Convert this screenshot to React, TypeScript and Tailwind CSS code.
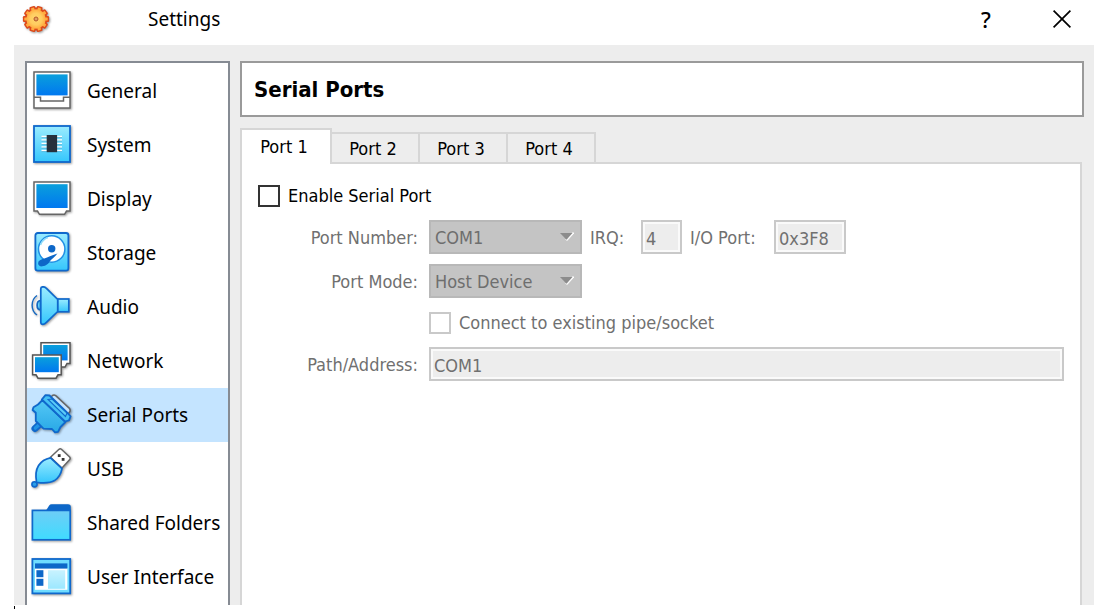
import { useState } from "react";
import type { ReactNode } from "react";

interface sidebarItem {
  name: string;
  icon: ReactNode;
}

const Gradients = () => {
  return (
    <svg width="0" height="0" className="absolute" aria-hidden="true">
      <defs>
        <linearGradient id="screen" x1="0" y1="0" x2="0" y2="1">
          <stop offset="0" stopColor="#0a9fdc" />
          <stop offset="1" stopColor="#0078f0" />
        </linearGradient>
        <linearGradient id="sky" x1="0" y1="0" x2="0" y2="1">
          <stop offset="0" stopColor="#9becff" />
          <stop offset="1" stopColor="#35c6fc" />
        </linearGradient>
        <linearGradient id="folder" x1="0" y1="0" x2="0" y2="1">
          <stop offset="0" stopColor="#6fcdf6" />
          <stop offset="1" stopColor="#3fdcff" />
        </linearGradient>
        <linearGradient id="plug" x1="0" y1="0" x2="0" y2="1">
          <stop offset="0" stopColor="#55c8f5" />
          <stop offset="1" stopColor="#28a8e6" />
        </linearGradient>
        <linearGradient id="pane" x1="0" y1="0" x2="0" y2="1">
          <stop offset="0" stopColor="#c8f2ff" />
          <stop offset="1" stopColor="#9ce8ff" />
        </linearGradient>
        <radialGradient id="gear">
          <stop offset="0" stopColor="#ffd66e" />
          <stop offset="0.6" stopColor="#ffcd60" />
          <stop offset="1" stopColor="#ffab40" />
        </radialGradient>
      </defs>
    </svg>
  );
};

const Icon = ({ children }: { children: ReactNode }) => {
  return (
    <svg
      viewBox="0 0 42 42"
      aria-hidden="true"
      className="size-[42px] shrink-0 drop-shadow-[1px_1px_1px_rgba(0,0,0,0.4)]"
    >
      {children}
    </svg>
  );
};

const teeth = [18, 54, 90, 126, 162, 198, 234, 270, 306, 342];

const GearIcon = () => {
  return (
    <svg
      viewBox="0 0 28 28"
      aria-hidden="true"
      className="size-7 drop-shadow-[1px_1px_1px_rgba(0,0,0,0.4)]"
    >
      <g fill="#dd4a1c">
        {teeth.map((angle) => {
          return (
            <rect
              key={angle}
              x="11"
              y="0.9"
              width="6"
              height="6"
              rx="1.2"
              transform={`rotate(${angle} 14 14)`}
            />
          );
        })}
        <circle cx="14" cy="14" r="11.4" />
      </g>
      <g fill="#ffab40">
        {teeth.map((angle) => {
          return (
            <rect
              key={angle}
              x="12.4"
              y="2.3"
              width="3.2"
              height="5"
              rx="0.6"
              transform={`rotate(${angle} 14 14)`}
            />
          );
        })}
      </g>
      <circle cx="14" cy="14" r="9.7" fill="url(#gear)" />
      <circle cx="14" cy="14" r="2" fill="#e0a060" stroke="#b5562a" strokeWidth="1" />
    </svg>
  );
};

const items: sidebarItem[] = [
  {
    name: "General",
    icon: (
      <Icon>
        <rect x="3" y="2" width="36" height="36" fill="#fff" stroke="#666" strokeWidth="1.5" />
        <rect x="5.4" y="4.4" width="31.2" height="21" fill="url(#screen)" />
        <path d="M3 27.3H9.5V31H32.5V27.3H39" fill="none" stroke="#666" strokeWidth="1.5" />
      </Icon>
    ),
  },
  {
    name: "System",
    icon: (
      <Icon>
        <rect x="3" y="2" width="36" height="36" fill="url(#sky)" stroke="#0f68cc" strokeWidth="1.8" />
        <path
          d="M10.5 12.5H31M10.5 16H31M10.5 19.5H31M10.5 23H31M10.5 26.5H31"
          stroke="#fff"
          strokeWidth="1.3"
        />
        <path
          d="M10.5 13.6H31M10.5 17.1H31M10.5 20.6H31M10.5 24.1H31M10.5 27.6H31"
          stroke="#4a9fc4"
          strokeWidth="0.6"
        />
        <rect x="15.7" y="11" width="10.4" height="17.2" fill="#26303d" />
      </Icon>
    ),
  },
  {
    name: "Display",
    icon: (
      <Icon>
        <path
          d="M3 4H39V33H35.5L33.5 36.3H8.5L6.5 33H3Z"
          fill="#fff"
          stroke="#666"
          strokeWidth="1.5"
        />
        <rect x="5.4" y="6.2" width="31.2" height="23.8" fill="url(#screen)" />
      </Icon>
    ),
  },
  {
    name: "Storage",
    icon: (
      <Icon>
        <rect x="4.4" y="1" width="33" height="37.6" rx="2.4" fill="url(#sky)" stroke="#0f68cc" strokeWidth="1.8" />
        <circle cx="20.7" cy="17" r="13.2" fill="#fff" stroke="#2190e4" strokeWidth="1.5" />
        <path d="M9.5 13A12 12 0 0 1 17 5.5" fill="none" stroke="#8fdcf8" strokeWidth="1.5" />
        <path
          d="M7.5 29.5C9 27.5 12.5 26.8 16 25.5C19 24.2 22.5 23 26.5 21.5C24 24.5 21 27 18.6 29.5C17.5 32.5 13.5 34.4 10 34.4C7.5 34 6.5 32 7.5 29.5Z"
          fill="#0d67c8"
        />
        <circle cx="20.7" cy="16.7" r="3.7" fill="#0d67c8" />
      </Icon>
    ),
  },
  {
    name: "Audio",
    icon: (
      <Icon>
        <path d="M9.5 14.5C5 15 5 23.5 9.5 23.8Z" fill="#65d5fb" stroke="#1568c0" strokeWidth="1.7" />
        <path d="M6 9.5C-0.5 14 -0.5 24.5 6 29" fill="none" stroke="#1568c0" strokeWidth="1.4" />
        <rect x="26.5" y="13" width="11.3" height="12.8" fill="url(#sky)" stroke="#0f68cc" strokeWidth="1.7" />
        <path
          d="M9.8 2.8Q9.8 0.8 12 0.8Q14 0.8 15.2 2.2L26.7 13.5V25.5L15.2 36.6Q14 38.3 12 38.3Q9.8 38.3 9.8 36.2Z"
          fill="url(#sky)"
          stroke="#0f68cc"
          strokeWidth="1.7"
        />
      </Icon>
    ),
  },
  {
    name: "Network",
    icon: (
      <Icon>
        <path d="M10 2.8H39V23.5H36L34 27H15L13 23.5H10Z" fill="#fff" stroke="#555" strokeWidth="1.5" />
        <rect x="12.2" y="5" width="24.4" height="15.4" fill="url(#screen)" />
        <path d="M1.6 15H30.2V34.8H27L25 38.2H7L5 34.8H1.6Z" fill="#fff" stroke="#555" strokeWidth="1.5" />
        <rect x="4" y="17.2" width="23.8" height="15" fill="url(#screen)" />
      </Icon>
    ),
  },
  {
    name: "Serial Ports",
    icon: (
      <Icon>
        <path
          d="M18 5L21.5 1.5Q23 0.5 25 1.8L38.5 14.5Q39.8 16.5 38.6 18L36 21.5Z"
          fill="#c4e4ff"
          stroke="#666"
          strokeWidth="1.6"
        />
        <path d="M10 29L4 34.5" stroke="#0f68cc" strokeWidth="7" strokeLinecap="round" />
        <path d="M9 30L4.4 34.1" stroke="#1e93e4" strokeWidth="3.4" strokeLinecap="round" />
        <path
          d="M11.5 6L7 10.5L2.5 13.2L1.6 16L4.8 18.8L4.8 27L12.5 34.6L21 35L24 38.4L27 37.8L29.5 33L34.5 28Z"
          fill="url(#plug)"
          stroke="#0f68cc"
          strokeWidth="1.8"
          strokeLinejoin="round"
        />
        <path
          d="M10.8 5.5L14.5 1.2L18.5 1.5L37.5 20L39.6 22.3L38 26.4L34 27.5Z"
          fill="#45bff4"
          stroke="#0f68cc"
          strokeWidth="1.8"
          strokeLinejoin="round"
        />
        <path d="M17 5.5L21 5L36 19L34.5 22.5Z" fill="#5cccf8" stroke="#0f68cc" strokeWidth="1.1" />
      </Icon>
    ),
  },
  {
    name: "USB",
    icon: (
      <Icon>
        <path
          d="M19.5 9.2L28 1.3Q29.3 0.3 30.6 1.5L38.6 9Q39.8 10.4 38.5 11.8L31 20Z"
          fill="#fff"
          stroke="#666"
          strokeWidth="1.5"
        />
        <rect x="26.8" y="6.2" width="2.8" height="2.8" fill="#333" />
        <rect x="30.7" y="10" width="2.8" height="2.8" fill="#333" />
        <circle cx="3.5" cy="36.3" r="2.6" fill="#2b9fe7" stroke="#0f68cc" strokeWidth="1.6" />
        <path
          d="M5.6 34.4C4.6 29 4.4 22.5 7.6 17.5C10.5 13 15.5 10.6 19.5 9.8L31 20.6C30.2 24.8 27.5 30 23.5 32.6C18.5 35.6 11.5 35.2 5.6 34.4Z"
          fill="url(#sky)"
          stroke="#0f68cc"
          strokeWidth="1.7"
          strokeLinejoin="round"
        />
      </Icon>
    ),
  },
  {
    name: "Shared Folders",
    icon: (
      <Icon>
        <path d="M15 8.5L18.2 3.4Q19 2.3 20.5 2.3H37Q39.8 2.3 39.8 5V9Z" fill="#0d67c8" />
        <rect x="1.4" y="8.4" width="37.8" height="29.4" fill="url(#folder)" stroke="#0f68cc" strokeWidth="1.7" />
      </Icon>
    ),
  },
  {
    name: "User Interface",
    icon: (
      <Icon>
        <rect x="1.4" y="3" width="37.8" height="34.4" fill="#6fdcff" stroke="#0f68cc" strokeWidth="1.8" />
        <rect x="4" y="12" width="32.4" height="21.8" fill="#fff" />
        <rect x="4" y="7.4" width="32.4" height="5.2" fill="#0d67c8" />
        <rect x="5.4" y="14.2" width="7" height="7" fill="#0d67c8" />
        <rect x="5.4" y="22.8" width="7" height="7" fill="#0d67c8" />
        <rect x="17" y="14.2" width="17.2" height="18.6" fill="url(#pane)" />
      </Icon>
    ),
  },
];

const tabs = ["Port 1", "Port 2", "Port 3", "Port 4"];

const inputStyle =
  "h-[34px] border-2 border-[#c9c9c9] bg-[#ededed] px-[3px] pt-[2px] text-[#707070] shadow-[inset_0_0_0_2px_#fafafa] disabled:opacity-100";

const Select = ({ id, value }: { id: string; value: string }) => {
  return (
    <div className="relative w-[153px]">
      <select
        id={id}
        disabled
        className="h-[34px] w-full appearance-none border-2 border-[#b8b8b8] bg-[#c4c4c4] px-1 pt-[2px] text-[#6e6e6e] disabled:opacity-100"
      >
        <option>{value}</option>
      </select>
      <svg
        viewBox="0 0 14 10"
        aria-hidden="true"
        className="absolute top-3 right-2 h-[10px] w-[14px]"
      >
        <path d="M14 1L7 8.5L6 7.5L12 1Z" fill="#fff" stroke="#fff" />
        <path d="M0 1H12.5L6.5 7.8Z" fill="#8c8c8c" />
      </svg>
    </div>
  );
};

export default function App() {
  const [selected, setSelected] = useState("Serial Ports");
  const [tab, setTab] = useState("Port 1");
  const [enabled, setEnabled] = useState(false);

  return (
    <div className="bg-white pr-1 pl-[14px] font-['Noto_Sans',sans-serif] text-black">
      <Gradients />
      <header className="flex h-[45px] items-center pb-[7px]">
        <div className="ml-2 flex w-[126px]">
          <GearIcon />
        </div>
        <h1 className="grow text-[19px] leading-6">Settings</h1>
        <button
          aria-label="Help"
          className="mr-[52px] w-7 text-center text-[22px] leading-6 font-medium"
        >
          ?
        </button>
        <button aria-label="Close" className="mr-[22px] flex">
          <svg viewBox="0 0 20 20" className="size-5" aria-hidden="true">
            <path d="M1.6 1.6L18.4 18.4M18.4 1.6L1.6 18.4" stroke="#000" strokeWidth="1.7" />
          </svg>
        </button>
      </header>

      <div className="flex gap-[10px] bg-[#ededed] pt-4 pr-[10px] pl-[11px]">
        <nav className="w-[205px] shrink-0 border-2 border-b-0 border-[#868b93] bg-white py-px">
          {items.map((item) => {
            return (
              <button
                key={item.name}
                onClick={() => setSelected(item.name)}
                className={`flex h-[54px] w-full items-center gap-[14px] pl-1 text-left text-[19px] leading-6 whitespace-nowrap ${
                  selected === item.name ? "bg-[#c4e4ff]" : "bg-white"
                }`}
              >
                {item.icon}
                {item.name}
              </button>
            );
          })}
        </nav>

        <main className="flex min-w-0 grow flex-col text-[18px] leading-6">
          <h2 className="flex h-14 items-center border-2 border-[#9a9a9a] bg-white px-3 pt-[2px] font-['DejaVu_Sans_Condensed','DejaVu_Sans',sans-serif] text-[22px] font-bold">
            Serial Ports
          </h2>

          <div className="mt-[11px] mr-[2px] flex grow flex-col font-['DejaVu_Sans_Condensed','DejaVu_Sans',sans-serif]">
            <div role="tablist" className="flex items-end">
              {tabs.map((name) => {
                return (
                  <button
                    key={name}
                    role="tab"
                    aria-selected={tab === name}
                    onClick={() => setTab(name)}
                    className={
                      tab === name
                        ? "h-9 w-[92px] border-2 border-b-0 border-[#d6d6d6] bg-white pr-1"
                        : "h-8 w-[88px] border-t-2 border-r-2 border-b-2 border-[#d6d6d6] bg-[#ededed] pt-[2px] pr-1"
                    }
                  >
                    {name}
                  </button>
                );
              })}
              <div className="grow border-b-2 border-[#d6d6d6]" />
            </div>

            <section className="grow border-x-2 border-[#d6d6d6] bg-white px-4 pt-5">
              <label className="flex items-center gap-2">
                <input
                  type="checkbox"
                  checked={enabled}
                  onChange={(e) => setEnabled(e.target.checked)}
                  className="size-[22px] appearance-none border-2 border-[#333] bg-white checked:bg-[#333]"
                />
                Enable Serial Port
              </label>

              <div className="mt-3 grid grid-cols-[160px_1fr] items-center gap-x-[11px] gap-y-[10px] text-[#707070]">
                <label htmlFor="number" className="pt-[2px] text-right">
                  Port Number:
                </label>
                <div className="flex items-center">
                  <Select id="number" value="COM1" />
                  <label htmlFor="irq" className="ml-2 w-[51px] pt-[2px]">
                    IRQ:
                  </label>
                  <input
                    id="irq"
                    disabled
                    value="4"
                    className={`${inputStyle} w-[41px]`}
                  />
                  <label htmlFor="ioport" className="ml-2 w-[84px] pt-[2px]">
                    I/O Port:
                  </label>
                  <input
                    id="ioport"
                    disabled
                    value="0x3F8"
                    className={`${inputStyle} w-[72px]`}
                  />
                </div>

                <label htmlFor="mode" className="pt-[2px] text-right">
                  Port Mode:
                </label>
                <Select id="mode" value="Host Device" />

                <label className="col-start-2 flex h-[29px] items-center gap-2">
                  <input
                    type="checkbox"
                    disabled
                    className="size-[22px] appearance-none border-2 border-[#c9c9c9] bg-white"
                  />
                  Connect to existing pipe/socket
                </label>

                <label htmlFor="path" className="pt-[2px] text-right">
                  Path/Address:
                </label>
                <input
                  id="path"
                  disabled
                  value="COM1"
                  className={`${inputStyle} w-full`}
                />
              </div>
            </section>
          </div>
        </main>
      </div>
      <div className="mt-px h-[3px] w-px bg-black" />
    </div>
  );
}
